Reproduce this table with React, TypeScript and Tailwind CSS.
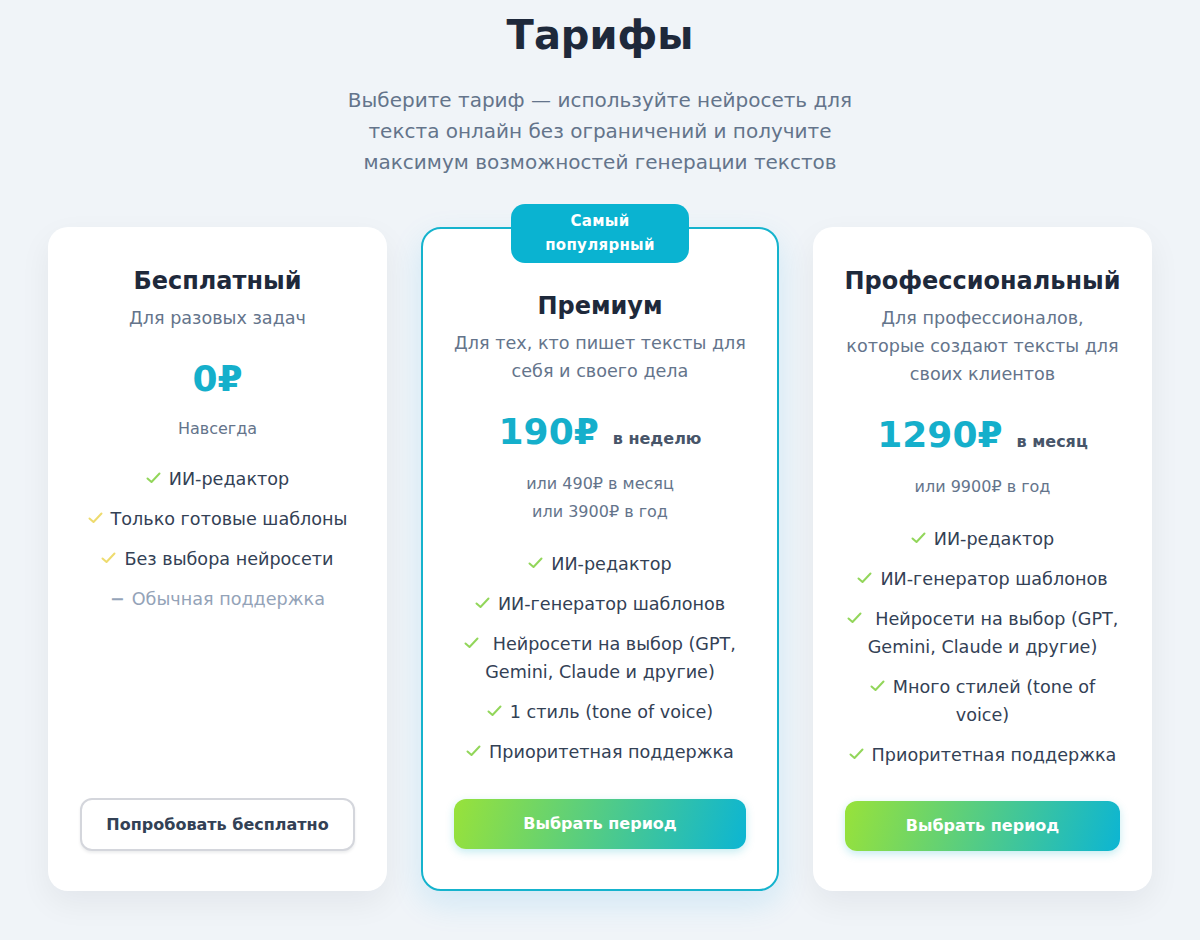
import React from "react";

type Feature = {
  text: string;
  kind?: "ok" | "warn" | "off";
};

type Plan = {
  name: string;
  desc: string;
  price: string;
  period?: string;
  note: string[];
  features: Feature[];
  popular?: boolean;
  free?: boolean;
};

const plans: Plan[] = [
  {
    name: "Бесплатный",
    desc: "Для разовых задач",
    price: "0₽",
    note: ["Навсегда"],
    free: true,
    features: [
      { text: "ИИ-редактор" },
      { text: "Только готовые шаблоны", kind: "warn" },
      { text: "Без выбора нейросети", kind: "warn" },
      { text: "Обычная поддержка", kind: "off" },
    ],
  },
  {
    name: "Премиум",
    desc: "Для тех, кто пишет тексты для себя и своего дела",
    price: "190₽",
    period: "в неделю",
    note: ["или 490₽ в месяц", "или 3900₽ в год"],
    popular: true,
    features: [
      { text: "ИИ-редактор" },
      { text: "ИИ-генератор шаблонов" },
      { text: "\u00a0Нейросети на выбор (GPT, Gemini, Claude и другие)" },
      { text: "1 стиль (tone of voice)" },
      { text: "Приоритетная поддержка" },
    ],
  },
  {
    name: "Профессиональный",
    desc: "Для профессионалов, которые создают тексты для своих клиентов",
    price: "1290₽",
    period: "в месяц",
    note: ["или 9900₽ в год"],
    features: [
      { text: "ИИ-редактор" },
      { text: "ИИ-генератор шаблонов" },
      { text: "\u00a0Нейросети на выбор (GPT, Gemini, Claude и другие)" },
      { text: "Много стилей (tone of voice)" },
      { text: "Приоритетная поддержка" },
    ],
  },
];

// thin check mark like the one in the list
const Check = ({ color }: { color: string }) => (
  <svg
    width="15"
    height="12"
    viewBox="0 0 15 12"
    className="mr-[8px] inline-block align-[1px]"
    fill="none"
    stroke={color}
    strokeWidth="2"
    strokeLinecap="round"
    strokeLinejoin="round"
  >
    <path d="M1.5 6.5 L5.5 10 L13.5 1.5" />
  </svg>
);

const FeatureItem = ({ f }: { f: Feature }) => {
  if (f.kind === "off") {
    return (
      <li className="text-[#94a3b8]">
        <span className="mr-[7px] font-bold">−</span>
        {f.text}
      </li>
    );
  }
  return (
    <li className="text-[#334155]">
      <Check color={f.kind === "warn" ? "#eedb6e" : "#92d65a"} />
      {f.text}
    </li>
  );
};

const PlanCard = ({ plan }: { plan: Plan }) => {
  const cardClass = plan.popular
    ? "relative flex w-[358px] flex-col items-center rounded-[20px] border-2 border-[#15b3cd] bg-white px-[31px] pb-10 pt-[61px] text-center shadow-[0_12px_32px_rgba(14,165,233,0.14)]"
    : "relative flex w-[339px] flex-col items-center rounded-[20px] bg-white px-8 pb-10 pt-[38px] text-center shadow-[0_12px_32px_rgba(15,23,42,0.06)]";

  return (
    <div className={cardClass}>
      {plan.popular && (
        <div className="absolute left-1/2 top-[-25px] w-[178px] -translate-x-1/2 rounded-[14px] bg-[#0ab3d1] px-8 pb-[6px] pt-[5px] text-[15px] font-bold leading-6 tracking-[0.3px] text-white">
          Самый популярный
        </div>
      )}
      <h3 className="text-[24px] font-bold leading-8 text-[#1e293b]">
        {plan.name}
      </h3>
      <p className="mt-[7px] text-[17.6px] leading-7 text-[#64748b]">
        {plan.desc}
      </p>
      <div className="mt-[25px] flex items-baseline justify-center">
        <span className="text-[36px] font-bold leading-[44px] text-[#15afcb]">
          {plan.price}
        </span>
        {plan.period && (
          <span className="ml-[14px] text-[16px] font-bold text-[#475569]">
            {plan.period}
          </span>
        )}
      </div>
      <div
        className={
          plan.free
            ? "mt-4 text-[16px] leading-6 text-[#64748b]"
            : "mt-4 text-[16px] leading-7 text-[#64748b]"
        }
      >
        {plan.note.map((n) => (
          <div key={n}>{n}</div>
        ))}
      </div>
      <ul className="mt-6 flex flex-col gap-3 text-[17.6px] leading-7">
        {plan.features.map((f) => (
          <FeatureItem key={f.text} f={f} />
        ))}
      </ul>
      <div className="mt-auto w-full pt-8">
        {plan.free ? (
          <button className="h-[53px] w-full rounded-xl border-2 border-[#d4d6dc] bg-white text-[16px] font-bold text-[#334155] shadow-[0_2px_3px_rgba(15,23,42,0.08)]">
            Попробовать бесплатно
          </button>
        ) : (
          <button className="h-[50px] w-full rounded-xl bg-linear-[105deg] from-[#98e23a] to-[#0cb5d3] text-[16px] font-bold text-white shadow-[0_3px_8px_rgba(20,180,200,0.25)]">
            Выбрать период
          </button>
        )}
      </div>
    </div>
  );
};

const App = () => {
  return (
    <div
      className="min-h-[940px] bg-[#f0f4f8] pt-[11px]"
      style={{ fontFamily: '"DejaVu Sans", "Noto Sans", sans-serif' }}
    >
      <div className="mx-auto flex max-w-[1104px] flex-col items-center">
        <h2 className="text-[40px] font-bold leading-[48px] text-[#1e293b]">
          Тарифы
        </h2>
        <p className="mt-[26px] max-w-[540px] text-center text-[20px] leading-[31px] text-[#64748b]">
          Выберите тариф — используйте нейросеть для текста онлайн без
          ограничений и получите максимум возможностей генерации текстов
        </p>
        <div className="mt-[49px] flex w-full items-stretch justify-between">
          {plans.map((p) => (
            <PlanCard key={p.name} plan={p} />
          ))}
        </div>
      </div>
    </div>
  );
};

export default App;
